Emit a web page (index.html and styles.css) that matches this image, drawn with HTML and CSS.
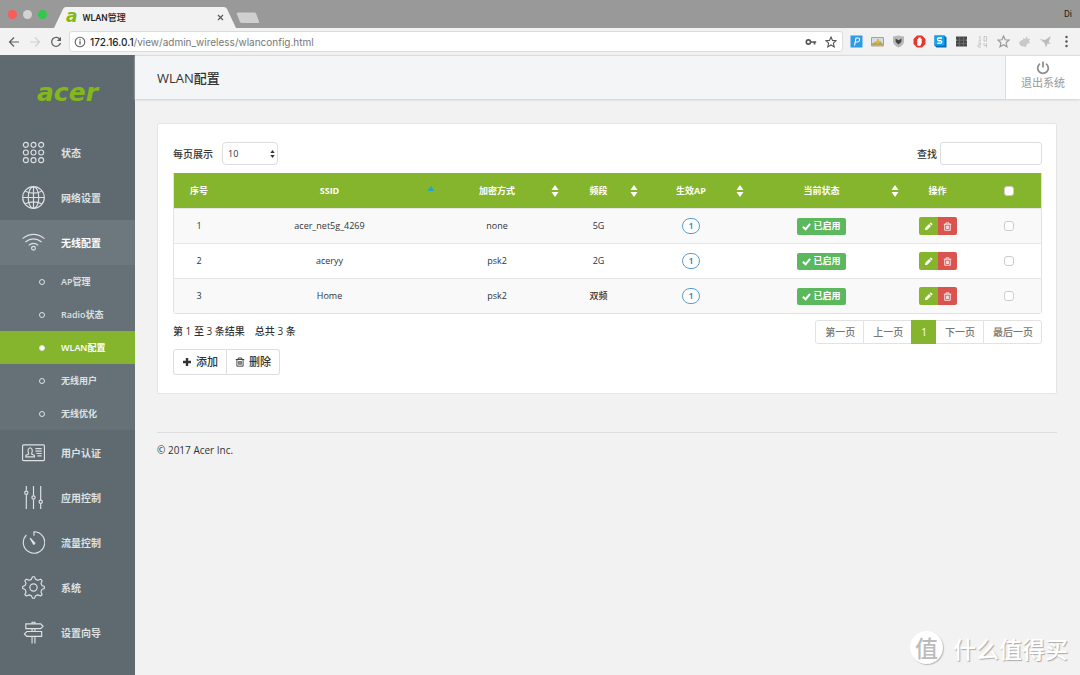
FILE: index.html
```html
<!DOCTYPE html>
<html lang="zh-CN">
<head>
<meta charset="utf-8">
<meta name="viewport" content="width=device-width, initial-scale=1">
<title>WLAN管理</title>
<link rel="stylesheet" href="styles.css">
</head>
<body>
<svg class="defs" aria-hidden="true">
  <symbol id="sort" viewBox="0 0 8 12"><path d="M4 0 7.5 5H.5zM4 12 .5 7h7z" fill="#fff"/></symbol>
  <symbol id="asc" viewBox="0 0 8 12"><path d="M4 1 7.5 6H.5z" fill="#26a5c9"/></symbol>
  <symbol id="check" viewBox="0 0 10 10"><path d="M1 5.2 4 8l5-6" fill="none" stroke="currentColor" stroke-width="2.2"/></symbol>
  <symbol id="pencil" viewBox="0 0 10 10"><path d="M1 9l.5-2.7L5.6 2.200l2.200 2.200L3.700 8.500zM6.200 1.600 7 .8q.5-.4 1 0L9.200 2q.4.500 0 1l-.8.8z" fill="currentColor"/></symbol>
  <symbol id="trash" viewBox="0 0 10 10"><path d="M.8 2.500h8.400M3.300 2.300V1h3.400v1.300M1.900 2.700v6.500h6.200V2.700M3.800 4v3.800M5 4v3.800M6.200 4v3.800" fill="none" stroke="currentColor" stroke-width=".9"/></symbol>
  <symbol id="star" viewBox="0 0 12 12"><path d="M6 1l1.500 3.400 3.600.3-2.700 2.500.8 3.700L6 9l-3.200 1.900.8-3.700L.9 4.700l3.600-.3z" fill="none" stroke="currentColor" stroke-width="1.100"/></symbol>
</svg>

<header class="browser">
  <div class="tabstrip">
    <div class="lights"><span class="light red"></span><span class="light grey"></span><span class="light green"></span></div>
    <div class="tab">
      <svg class="tab-shape" viewBox="0 0 182 21" preserveAspectRatio="none" aria-hidden="true"><path d="M0 21 9 2q1-2 3-2h158q2 0 3 2l9 19z" fill="#f2f2f2"/></svg>
      <div class="tab-content">
        <span class="favicon" aria-hidden="true">a</span><span class="tab-title">WLAN管理</span>
        <button class="plain tab-close" aria-label="关闭标签页"><svg width="7" height="7" viewBox="0 0 7 7"><path d="M1 1l5 5M6 1 1 6" stroke="#555" stroke-width="1.100"/></svg></button>
      </div>
    </div>
    <button class="plain new-tab" aria-label="新标签页"><svg width="24" height="12" viewBox="0 0 24 12"><path d="M2 .5h16q1.500 0 2 1l3 8q.5 1.500-1 1.500H6q-1.500 0-2-1L.8 2Q.3.500 2 .5z" fill="#cfcfcf"/></svg></button>
    <span class="profile">Di</span>
  </div>
  <div class="toolbar">
    <nav class="nav-buttons" aria-label="浏览">
      <button class="plain" aria-label="后退"><svg width="12" height="12" viewBox="0 0 12 12"><path d="M11 6H1.500M6 1.500 1.500 6 6 10.500" fill="none" stroke="#606060" stroke-width="1.200"/></svg></button>
      <button class="plain" aria-label="前进"><svg width="12" height="12" viewBox="0 0 12 12"><path d="M1 6h9.500M6 1.500 10.500 6 6 10.500" fill="none" stroke="#d0d0d0" stroke-width="1.200"/></svg></button>
      <button class="plain" aria-label="刷新"><svg width="12" height="12" viewBox="0 0 12 12"><path d="M10 3.500A4.500 4.500 0 1 0 10.500 7" fill="none" stroke="#606060" stroke-width="1.300"/><path d="M11 .8v4.200H6.800z" fill="#606060"/></svg></button>
    </nav>
    <div class="address">
      <svg width="12" height="12" viewBox="0 0 12 12" aria-hidden="true"><circle cx="6" cy="6" r="4.800" fill="none" stroke="#606060" stroke-width="1.100"/><path d="M6 5.300v3.200M6 3.200v1.200" stroke="#606060" stroke-width="1.300"/></svg>
      <span class="url"><span class="host">172.16.0.1</span>/view/admin_wireless/wlanconfig.html</span>
      <button class="plain" aria-label="密码"><svg width="12" height="12" viewBox="0 0 12 12"><circle cx="3.400" cy="6" r="2.100" fill="none" stroke="#555" stroke-width="1.600"/><path d="M5.500 6h5.700M9.500 6v2.400" stroke="#555" stroke-width="1.700"/></svg></button>
      <button class="plain" aria-label="收藏"><svg width="12" height="12"><use href="#star"/></svg></button>
    </div>
    <div class="extensions">
      <svg width="13" height="13" viewBox="0 0 13 13"><path d="M.5.500h12v12H.500z" fill="#2e9be6"/><path d="M4.500 10.500 6 3h2q2 0 1.600 2T7.400 7H5.500" fill="none" stroke="#fff" stroke-width="1.100"/></svg>
      <svg width="13" height="13" viewBox="0 0 13 13"><path d="M.5 2.500h12v8.500H.500z" fill="#d4dde0" stroke="#a5a294"/><path d="M1 8.500 4 7l3 1 2-2 3 3v1.500H1z" fill="#b6a45c"/><path d="M6 4h2v2h2L7 9 4 6h2z" fill="#e4b52e"/></svg>
      <svg width="13" height="13" viewBox="0 0 13 13"><path d="M1 1.500 6.500.5l5.500 1v5q-.5 4-5.500 6-5-2-5.500-6z" fill="#b8b8b8"/><path d="M3.500 3.500 6 5h1l2.500-1.500L9.300 7 6.500 9.500 3.700 7z" fill="#444"/></svg>
      <svg width="13" height="13" viewBox="0 0 13 13"><path d="M4 .5h5L12.500 4v5L9 12.500H4L.5 9V4z" fill="#e23830"/><path d="M4.300 10.500V4.500q.6-1 1-.2V3q.6-1 1.100 0v-.5q.7-.8 1.200 0V4q.7-1 1.100 0v4l-1.500 3z" fill="#fff"/></svg>
      <svg width="13" height="13" viewBox="0 0 13 13"><path d="M.5.500h10l2 2v10h-10l-2-2z" fill="#056fb8"/><path d="M.5.500h10v10h-10z" fill="#12a4f0"/><path d="M8 3H5Q3.300 3.200 3.500 4.500T5 5.700h1.500q1.400.200 1.300 1.300T6.500 8.300H3.300" fill="none" stroke="#fff" stroke-width="1.400"/></svg>
      <svg width="13" height="13" viewBox="0 0 13 13"><path d="M1 1.500h11v3l-1 .5 1 1v5.500H1V6l1-1-1-.5z" fill="#484848"/><path d="M1 5.200h11M1 8.500h11M4.500 2v9M8.500 2v9" stroke="#777" stroke-width=".6"/></svg>
      <svg width="13" height="13" viewBox="0 0 13 13"><path d="M3 1.500h1V6M2.500 6H5M8 1.500h2.500V6H8zM2 8h2.500v2H2v2h3M8 8v2.500h3M10.500 8v4.500" fill="none" stroke="#c6c6c6"/></svg>
      <svg width="13" height="13" viewBox="0 0 12 12" class="soft"><use href="#star"/></svg>
      <svg width="13" height="13" viewBox="0 0 13 13"><path d="M1 8q1-3 4-3V3l2 1 2-3 .5 3 2.500-.5L11 6l1 2-3 1-1 3-5-1z" fill="#c9c9c9"/></svg>
      <svg width="13" height="13" viewBox="0 0 13 13"><path d="M1 4l5 1 6-4-2.500 6L12 9 8.500 8.500 7 12.500 5.500 8z" fill="#bbb"/></svg>
      <svg class="more" width="5" height="13" viewBox="0 0 5 13"><circle cx="2.500" cy="2" r="1.200" fill="#555"/><circle cx="2.500" cy="6.500" r="1.200" fill="#555"/><circle cx="2.500" cy="11" r="1.200" fill="#555"/></svg>
    </div>
  </div>
</header>

<div class="app">
  <aside class="sidebar">
    <a class="logo" href="#">acer</a>
    <nav class="menu" aria-label="主菜单">
      <a class="item" href="#"><svg class="icon" viewBox="0 0 24 24"><g><circle cx="4" cy="4" r="2.600"/><circle cx="12" cy="4" r="2.600"/><circle cx="20" cy="4" r="2.600"/><circle cx="4" cy="12" r="2.600"/><circle cx="12" cy="12" r="2.600"/><circle cx="20" cy="12" r="2.600"/><circle cx="4" cy="20" r="2.600"/><circle cx="12" cy="20" r="2.600"/><circle cx="20" cy="20" r="2.600"/></g></svg>状态</a>
      <a class="item" href="#"><svg class="icon" viewBox="0 0 24 24"><circle cx="12" cy="12" r="11.300"/><path d="M12 1v22M1 12h22M3.500 5.500q8.500 4 17 0M3.500 18.500q8.500-4 17 0"/><ellipse cx="12" cy="12" rx="5.500" ry="11.300"/></svg>网络设置</a>
      <a class="item open" href="#"><svg class="icon" viewBox="0 0 24 24"><path d="M.5 8q11.500-9 23 0M3.500 11.500q8.500-6.500 17 0M7 15q5-4 10 0"/><circle cx="12" cy="18" r="2"/></svg>无线配置</a>
      <div class="submenu">
        <a href="#"><span class="dot"></span>AP管理</a>
        <a href="#"><span class="dot"></span>Radio状态</a>
        <a class="active" href="#" aria-current="page"><span class="dot"></span>WLAN配置</a>
        <a href="#"><span class="dot"></span>无线用户</a>
        <a href="#"><span class="dot"></span>无线优化</a>
      </div>
      <a class="item" href="#"><svg class="icon" viewBox="0 0 24 24"><rect x=".6" y="4" width="22.800" height="16.500" rx="1"/><path d="M4 16.500v-1.500l3-1.500Q5 8 8.500 7q3.500 1 1.500 6.500l3 1.500v1.500zM14 8h6.500M14 10.500h6.500M15 13h5.500M16 15.500h4.500"/></svg>用户认证</a>
      <a class="item" href="#"><svg class="icon" viewBox="0 0 24 24"><path d="M4.500 0v5M4.500 9v15M12 0v10M12 14v10M19.500 0v14.500M19.500 18.500V24"/><circle cx="4.500" cy="7" r="1.700"/><circle cx="12" cy="12" r="1.700"/><circle cx="19.500" cy="16.500" r="1.700"/></svg>应用控制</a>
      <a class="item" href="#"><svg class="icon" viewBox="0 0 24 24"><path d="M12.500 5V.8A11.200 11.200 0 1 1 4.500 4.200"/><path d="M8.500 7.500 13.300 12.500q.3 1.300-1.200 1.200z" fill="#dde1e3"/></svg>流量控制</a>
      <a class="item" href="#"><svg class="icon" viewBox="0 0 24 24"><path d="M9.800 3.500 11 .8h2l1.200 2.700 2.300 1 2.900-1.200 1.600 1.600-1.200 2.800 1 2.300 2.500 1v2l-2.500 1-1 2.600 1.200 2.700-1.600 1.600-2.900-1.200-2.300 1L13 23.200h-2l-1.200-2.500-2.300-1-2.900 1.200L3 19.300l1.200-2.700-1-2.600-2.500-1v-2l2.500-1 1-2.300L3 4.900l1.600-1.600 2.900 1.200z" stroke-linejoin="round"/><circle cx="12" cy="12" r="3.800"/></svg>系统</a>
      <a class="item" href="#"><svg class="icon" viewBox="0 0 24 24"><path d="M10.500 3V1.300h3V3M4 3h15.500L22 5.500 19.500 8H4zM10.500 8v3M13.500 8v3M5 11h15.500v5H5L2.500 13.500zM10.500 16v7.500M13.500 16v7.500"/></svg>设置向导</a>
    </nav>
  </aside>

  <div class="main">
    <header class="topbar">
      <h1>WLAN配置</h1>
      <a class="logout" href="#"><svg width="14" height="14" viewBox="0 0 14 14" aria-hidden="true"><path d="M4 2.800a5.300 5.300 0 1 0 6 0M7 .5v6" fill="none" stroke="#8f8f8f" stroke-width="1.800"/></svg>退出系统</a>
    </header>
    <main class="content">
      <section class="card">
        <div class="filters">
          <label class="field" for="length">每页展示</label>
          <span class="select"><select id="length"><option>10</option><option>25</option><option>50</option></select><svg width="5" height="10" viewBox="0 0 5 10" aria-hidden="true"><path d="M2.500 1 4.700 4H.3zM2.500 9 .3 6h4.400z" fill="#333"/></svg></span>
          <label class="find" for="search">查找</label>
          <input class="search" id="search" type="search">
        </div>
        <table class="grid">
          <colgroup><col class="c-no"><col class="c-ssid"><col class="c-enc"><col class="c-band"><col class="c-ap"><col class="c-state"><col class="c-op"><col class="c-sel"></colgroup>
          <thead><tr>
            <th>序号</th>
            <th><button class="sorter"><span>SSID</span><svg><use href="#asc"/></svg></button></th>
            <th><button class="sorter"><span>加密方式</span><svg><use href="#sort"/></svg></button></th>
            <th><button class="sorter"><span>频段</span><svg><use href="#sort"/></svg></button></th>
            <th><button class="sorter"><span>生效AP</span><svg><use href="#sort"/></svg></button></th>
            <th><button class="sorter"><span>当前状态</span><svg><use href="#sort"/></svg></button></th>
            <th>操作</th>
            <th><input type="checkbox" aria-label="全选"></th>
          </tr></thead>
          <tbody>
            <tr><td>1</td><td>acer_net5g_4269</td><td>none</td><td>5G</td><td><a class="count" href="#">1</a></td><td><button class="state"><svg><use href="#check"/></svg>已启用</button></td><td><span class="ops"><button class="edit" aria-label="编辑"><svg><use href="#pencil"/></svg></button><button class="remove" aria-label="删除"><svg><use href="#trash"/></svg></button></span></td><td><input type="checkbox" aria-label="选择 acer_net5g_4269"></td></tr>
            <tr><td>2</td><td>aceryy</td><td>psk2</td><td>2G</td><td><a class="count" href="#">1</a></td><td><button class="state"><svg><use href="#check"/></svg>已启用</button></td><td><span class="ops"><button class="edit" aria-label="编辑"><svg><use href="#pencil"/></svg></button><button class="remove" aria-label="删除"><svg><use href="#trash"/></svg></button></span></td><td><input type="checkbox" aria-label="选择 aceryy"></td></tr>
            <tr><td>3</td><td>Home</td><td>psk2</td><td>双频</td><td><a class="count" href="#">1</a></td><td><button class="state"><svg><use href="#check"/></svg>已启用</button></td><td><span class="ops"><button class="edit" aria-label="编辑"><svg><use href="#pencil"/></svg></button><button class="remove" aria-label="删除"><svg><use href="#trash"/></svg></button></span></td><td><input type="checkbox" aria-label="选择 Home"></td></tr>
          </tbody>
        </table>
        <div class="below">
          <div class="left">
            <p class="info"><span>第 1 至 3 条结果</span><span>总共 3 条</span></p>
            <div class="actions">
              <button><svg width="10" height="10" viewBox="0 0 10 10"><path d="M5 1v8M1 5h8" stroke="#333" stroke-width="2.400"/></svg>添加</button>
              <button><svg width="10" height="10"><use href="#trash"/></svg>删除</button>
            </div>
          </div>
          <nav class="pages" aria-label="分页"><a href="#">第一页</a><a href="#">上一页</a><a class="current" href="#" aria-current="page">1</a><a href="#">下一页</a><a href="#">最后一页</a></nav>
        </div>
      </section>
      <footer class="footer">© 2017 Acer Inc.</footer>
    </main>
  </div>
</div>
<div class="watermark"><span class="seal">值</span><span>什么值得买</span></div>
</body>
</html>
```
FILE: styles.css
```css
* { box-sizing: border-box; }
body {
  margin: 0;
  min-height: 100vh;
  display: flex;
  flex-direction: column;
  background: #f2f2f2;
  color: #333;
  font: 500 9px/16px "Open Sans", "Noto Sans CJK SC", sans-serif;
}
.defs { display: none; }
button, input, select { font: inherit; color: inherit; margin: 0; }
button { cursor: pointer; }
a { color: inherit; text-decoration: none; }
.plain { display: flex; align-items: center; justify-content: center; padding: 0; border: 0; background: none; }

/* browser window */
.browser { font-family: Roboto, "Noto Sans CJK SC", sans-serif; font-weight: 400; }
.tabstrip { display: flex; align-items: flex-end; height: 28px; padding: 0 8px; background: #999; }
.lights { display: flex; gap: 6px; width: 46px; padding-bottom: 9px; }
.light { width: 9px; height: 9px; border-radius: 50%; }
.red { background: #fc5b57; }
.grey { background: #d2d2d2; }
.green { background: #34c84a; }
.tab { display: grid; width: 182px; height: 21px; }
.tab-shape, .tab-content { grid-area: 1 / 1; width: 100%; height: 21px; }
.tab-content { display: flex; align-items: center; gap: 5px; padding: 0 12px; font-size: 9px; font-weight: 500; color: #222; }
.favicon { color: #83b81a; font: italic bold 17px/18px "DejaVu Sans", sans-serif; padding-bottom: 3px; }
.tab-close { margin-left: auto; }
.new-tab { align-self: center; padding-top: 7px; }
.profile { margin-left: auto; align-self: center; font-size: 9px; color: #222; }
.toolbar { display: flex; align-items: center; height: 27px; padding: 0 11px 0 8px; background: #f2f2f2; }
.nav-buttons { display: flex; gap: 9px; width: 61px; }
.address { flex: 1; display: flex; align-items: center; gap: 8px; height: 21px; padding: 0 5px 0 4px; border: 1px solid #dcdcdc; border-radius: 3px; background: #fff; color: #555; }
.url { flex: 1; margin-left: -4px; font-family: Inter, sans-serif; font-size: 10px; color: #777; }
.host { color: #222; font-weight: 500; }
.extensions { display: flex; align-items: center; gap: 8px; padding-left: 7px; }
.soft { color: #999; }
.more { margin-left: 4px; }

/* application frame */
.app { flex: 1; display: flex; }
.sidebar { width: 135px; background: #5f6a70; color: #dde1e3; font-size: 10px; font-weight: 600; }
.logo { display: flex; align-items: center; justify-content: center; height: 75px; color: #83b81a; font: italic bold 25px/30px "DejaVu Sans", sans-serif; }
.menu { display: flex; flex-direction: column; }
.item { display: flex; align-items: center; gap: 16px; height: 45px; padding-left: 22px; }
.item.open { background: #6d787e; color: #fff; }
.icon { width: 23px; height: 23px; fill: none; stroke: #dde1e3; stroke-width: 1.2; }
.submenu { background: #667177; font-size: 9px; }
.submenu a { display: flex; align-items: center; gap: 16px; height: 33px; padding-left: 39px; }
.dot { width: 6px; height: 6px; border: 1px solid #dde1e3; border-radius: 50%; }
.submenu .active { background: #85b52d; color: #fff; }
.active .dot { background: #fff; }
.main { flex: 1; min-width: 0; }
.topbar { display: flex; align-items: stretch; justify-content: space-between; height: 44px; padding-left: 22px; border-top: 1px solid #ddd; background: #f3f5f7; box-shadow: 0 1px 2px #ccd1d4; }
.topbar h1 { margin: 0; align-self: center; font-size: 13px; line-height: 20px; font-weight: 500; }
.logout { display: flex; flex-direction: column; align-items: center; width: 75px; padding-top: 5px; border-left: 1px solid #ddd; background: #fff; color: #999; font-size: 11px; font-weight: 400; }

/* content */
.content { padding: 24px 23px 0 22px; }
.card { padding: 18px 14px 18px 15px; border: 1px solid #e5e5e5; border-radius: 2px; background: #fff; }
.filters { display: flex; align-items: center; margin-bottom: 8px; font-size: 10px; }
.select { display: grid; align-items: center; width: 56px; margin-left: 9px; }
.select select { grid-area: 1 / 1; width: 100%; height: 23px; padding: 0 5px; border: 1px solid #ddd; border-radius: 4px; background: #fff; font-size: 9px; appearance: none; }
.select svg { grid-area: 1 / 1; justify-self: end; margin-right: 3px; pointer-events: none; }
.find { margin-left: auto; }
.search { width: 102px; height: 23px; margin-left: 3px; padding: 0 6px; border: 1px solid #ddd; border-radius: 3px; background: #fff; appearance: none; }
.grid { width: 100%; table-layout: fixed; border-collapse: separate; border-spacing: 0; border: 1px solid #e2e2e2; border-top: 0; border-radius: 0 0 3px 3px; text-align: center; }
.c-no { width: 50px; }
.c-ssid { width: 211px; }
.c-enc { width: 124px; }
.c-band { width: 79px; }
.c-ap { width: 106px; }
.c-state { width: 155px; }
.c-op { width: 77px; }
.c-sel { width: 65px; }
.grid th { height: 35px; padding: 0; background: #85b52d; color: #fff; font-weight: 700; }
.grid td { height: 35px; padding: 0; border-top: 1px solid #e5e5e5; }
.grid tbody tr:nth-child(odd) { background: #f9f9f9; }
.sorter { display: grid; grid-template-columns: 1fr; align-items: center; width: 100%; padding: 0; border: 0; background: none; font-weight: 700; }
.sorter span, .sorter svg { grid-area: 1 / 1; }
.sorter span { justify-self: center; }
.sorter svg { justify-self: end; width: 8px; height: 12px; }
.grid input { display: block; width: 10px; height: 10px; margin: 0 auto; border: 1px solid #ccc; border-radius: 3px; background: #fff; appearance: none; }
.grid input:checked { background: #337ab7; }
.count { display: block; width: 18px; height: 16px; margin: 0 auto; border: 1px solid #5b9bd0; border-radius: 8px; background: #fff; color: #337ab7; line-height: 14px; font-weight: 600; }
.state { display: flex; align-items: center; gap: 2px; height: 17px; margin: 0 auto; padding: 0 5px; border: 0; border-radius: 2px; background: #5cb85c; color: #fff; font-weight: 600; }
.state svg, .ops svg { width: 9px; height: 9px; }
.ops { display: flex; justify-content: center; }
.ops button { display: flex; align-items: center; justify-content: center; width: 19px; height: 18px; padding: 0; border: 0; color: #fff; }
.ops .edit { background: #85b52d; border-radius: 2px 0 0 2px; }
.ops .remove { background: #d9534f; border-radius: 0 2px 2px 0; }
.below { display: flex; justify-content: space-between; align-items: flex-start; padding-top: 6px; font-size: 10px; }
.left { display: flex; flex-direction: column; gap: 7px; }
.info { display: flex; gap: 10px; margin: 0; line-height: 22px; }
.actions { display: flex; }
.actions button { display: flex; align-items: center; gap: 4px; height: 26px; padding: 0 8px; border: 1px solid #ddd; background: #fff; font-size: 11px; }
.actions button:first-child { border-radius: 3px 0 0 3px; }
.actions button + button { border-left: 0; border-radius: 0 3px 3px 0; }
.pages { display: flex; border: 1px solid #e2e2e2; border-radius: 3px; color: #777; line-height: 22px; }
.pages a { padding: 0 8px 0 9px; }
.pages a + a { border-left: 1px solid #e2e2e2; }
.pages .current { margin: -1px 0; padding: 1px 9px; background: #85b52d; color: #fff; border-color: #85b52d; }
.pages .current + a { border-left: 0; }
.footer { margin-top: 38px; padding-top: 9px; border-top: 1px solid #ddd; font-size: 10px; }

.watermark { position: absolute; right: 12px; bottom: 11px; display: flex; align-items: center; gap: 10px; color: #fff; font: 500 23px/32px "Noto Sans CJK SC", sans-serif; text-shadow: 1px 1px 1px #aaa; pointer-events: none; }
.seal { width: 33px; height: 33px; border-radius: 50%; background: #fff; box-shadow: 1px 1px 1px #bbb; color: #bbb; text-align: center; text-shadow: none; }
```
